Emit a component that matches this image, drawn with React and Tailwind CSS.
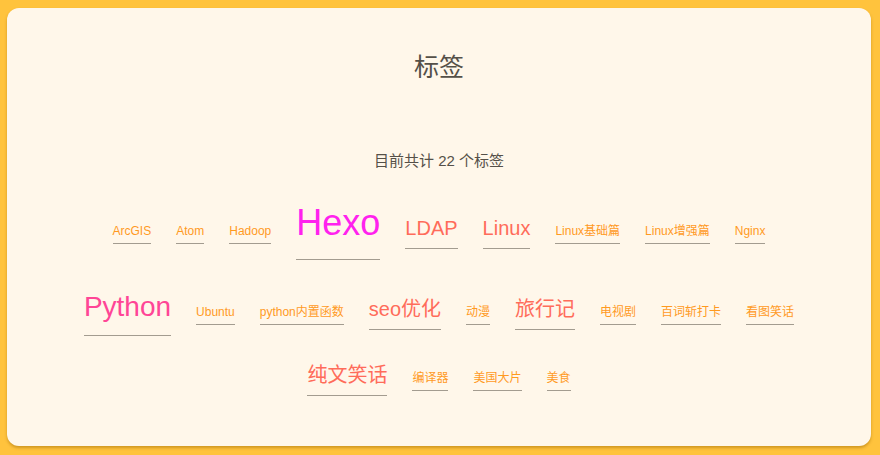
const TAGS = [
  { name: 'ArcGIS', size: 's' },
  { name: 'Atom', size: 's' },
  { name: 'Hadoop', size: 's' },
  { name: 'Hexo', size: 'xl' },
  { name: 'LDAP', size: 'm' },
  { name: 'Linux', size: 'm' },
  { name: 'Linux基础篇', size: 's' },
  { name: 'Linux增强篇', size: 's' },
  { name: 'Nginx', size: 's' },
  { name: 'Python', size: 'l' },
  { name: 'Ubuntu', size: 's' },
  { name: 'python内置函数', size: 's' },
  { name: 'seo优化', size: 'm' },
  { name: '动漫', size: 's' },
  { name: '旅行记', size: 'm' },
  { name: '电视剧', size: 's' },
  { name: '百词斩打卡', size: 's' },
  { name: '看图笑话', size: 's' },
  { name: '纯文笑话', size: 'm' },
  { name: '编译器', size: 's' },
  { name: '美国大片', size: 's' },
  { name: '美食', size: 's' },
];

const SIZES = {
  s: 'text-[12px] text-[#ff9a1f]',
  m: 'text-[20px] text-[#ff6c5a]',
  l: 'text-[28px] text-[#ff4596]',
  xl: 'text-[36px] text-[#ff22ee]',
};

export default function App() {
  return (
    <div
      className="min-h-[455px] bg-[#ffc33d] pt-2 pl-[7px] pr-[9px] pb-[9px]"
      style={{ fontFamily: '"Liberation Sans", "Noto Sans CJK SC", sans-serif' }}
    >
      <div className="h-[438px] rounded-xl bg-[#fff7ea] shadow-[0_2px_3px_rgba(150,100,0,0.45)] px-[62px] pt-[39px]">
        <h1 className="text-center text-[25px] leading-[40px] text-[#555048]">标签</h1>

        <p className="mt-[64px] text-center text-[15px] leading-5 text-[#555048]">
          目前共计 22 个标签
        </p>

        {/* tag cloud */}
        <div className="mt-[16px] flex flex-wrap items-baseline justify-center gap-x-[25px] gap-y-[19px]">
          {TAGS.map((t) => (
            <a
              key={t.name}
              href="#"
              className={`leading-[2] border-b border-[#a39c90] ${SIZES[t.size]}`}
            >
              {t.name}
            </a>
          ))}
        </div>
      </div>
    </div>
  );
}
